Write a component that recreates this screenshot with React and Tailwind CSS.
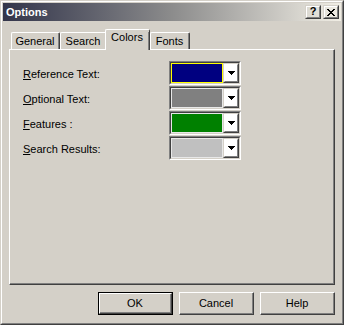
const rows = [
  { label: "Reference Text:", color: "bg-[#000080]", focus: true },
  { label: "Optional Text:", color: "bg-[#808080]" },
  { label: "Features :", color: "bg-[#008000]" },
  { label: "Search Results:", color: "bg-[#c0c0c0]" },
];

const tabs = ["General", "Search", "Colors", "Fonts"];

function Raised({ className = "", children }) {
  return (
    <div className={`border border-t-[#d4d0c8] border-l-[#d4d0c8] border-r-[#404040] border-b-[#404040] ${className}`}>
      <div className="w-full h-full border border-t-white border-l-white border-r-[#808080] border-b-[#808080] flex items-center justify-center">
        {children}
      </div>
    </div>
  );
}

function Arrow() {
  return (
    <svg width="7" height="4" viewBox="0 0 7 4" shapeRendering="crispEdges">
      <path d="M0 0H7V1H6V2H5V3H4V4H3V3H2V2H1V1H0Z" fill="#000" />
    </svg>
  );
}

function ColorCombo({ color, focus }) {
  return (
    <div className="w-[72px] h-[24px] border border-t-[#808080] border-l-[#808080] border-r-white border-b-white">
      <div className="w-full h-full flex border border-t-[#404040] border-l-[#404040] border-r-[#d4d0c8] border-b-[#d4d0c8] bg-white">
        <div className={`flex-1 p-px ${focus ? "bg-[#ffff00]" : "bg-[#e8e8e8]"}`}>
          <div className={`w-full h-full ${color}`} />
        </div>
        <Raised className="w-[16px] h-full">
          <Arrow />
        </Raised>
      </div>
    </div>
  );
}

function Tab({ name, active }) {
  if (active) {
    return (
      <div className="relative z-10 -ml-[2px] -mb-px h-[21px] w-[45px] bg-[#d4d0c8] border-l border-t border-r border-l-white border-t-white border-r-[#404040] rounded-t-[2px] flex justify-center pt-[2px]">
        <div className="h-full flex-1 border-r border-r-[#808080] flex justify-center">
          <span>{name}</span>
        </div>
      </div>
    );
  }
  const w = { General: "w-[49px]", Search: "w-[47px]", Fonts: "w-[40px]" }[name];
  return (
    <div className={`${w} h-[17px] border-l border-t border-r border-l-white border-t-white border-r-[#404040] rounded-t-[2px]`}>
      <div className="h-full border-r border-r-[#808080] flex items-center justify-center">
        <span>{name}</span>
      </div>
    </div>
  );
}

function DlgButton({ children, isDefault }) {
  const inner = (
    <div className="w-full h-full border border-t-white border-l-white border-r-[#404040] border-b-[#404040]">
      <div className="w-full h-full border-r border-b border-r-[#808080] border-b-[#808080] flex items-center justify-center">
        {children}
      </div>
    </div>
  );
  return isDefault ? (
    <div className="w-[75px] h-[23px] border border-black">{inner}</div>
  ) : (
    <div className="w-[75px] h-[23px]">{inner}</div>
  );
}

export default function App() {
  return (
    <div className="w-[344px] h-[325px] bg-[#d4d0c8] border border-t-[#d4d0c8] border-l-[#d4d0c8] border-r-[#404040] border-b-[#404040] font-['Liberation_Sans',Arial,sans-serif] text-[11px] text-black leading-none select-none">
      <div className="w-full h-full border border-t-white border-l-white border-r-[#808080] border-b-[#808080] p-px flex flex-col">
        {/* title bar */}
        <div className="h-[18px] flex items-center justify-between bg-gradient-to-r from-[#33354a] via-[#8c8c8c] to-[#f1eee5] pl-[2px] pr-[2px]">
          <span className="text-white font-bold text-[11px] ml-[1px]">Options</span>
          <div className="flex gap-[2px]">
            <Raised className="w-[16px] h-[14px]">
              <span className="font-bold text-[11px] -mt-px">?</span>
            </Raised>
            <Raised className="w-[16px] h-[14px]">
              <svg width="8" height="7" viewBox="0 0 8 7" shapeRendering="crispEdges">
                <path d="M0 0h2v1h1v1h2V1h1V0h2v1H7v1H6v1H5v1h1v1h1v1h1v1H6V6H5V5H3v1H2v1H0V6h1V5h1V4h1V3H2V2H1V1H0z" fill="#000" />
              </svg>
            </Raised>
          </div>
        </div>

        <div className="pl-[6px] pr-[6px]">
          {/* tabs */}
          <div className="mt-[8px] h-[20px] flex items-end pl-[2px]">
            {tabs.map((t) => (
              <Tab key={t} name={t} active={t === "Colors"} />
            ))}
          </div>

          {/* panel */}
          <div className="h-[236px] w-[326px] border border-t-white border-l-white border-r-[#404040] border-b-[#404040]">
            <div className="w-full h-full border-r border-b border-r-[#808080] border-b-[#808080] pl-[13px] pt-[11px] flex flex-col gap-px">
              {rows.map((r) => (
                <div key={r.label} className="flex items-center h-[24px]">
                  <div className="w-[146px] pt-[2px]">
                    <span className="underline underline-offset-[1px]">{r.label[0]}</span>
                    {r.label.slice(1)}
                  </div>
                  <ColorCombo color={r.color} focus={r.focus} />
                </div>
              ))}
            </div>
          </div>

          {/* buttons */}
          <div className="mt-[7px] flex justify-end gap-[6px] pr-[0px]">
            <DlgButton isDefault>OK</DlgButton>
            <DlgButton>Cancel</DlgButton>
            <DlgButton>Help</DlgButton>
          </div>
        </div>
      </div>
    </div>
  );
}
